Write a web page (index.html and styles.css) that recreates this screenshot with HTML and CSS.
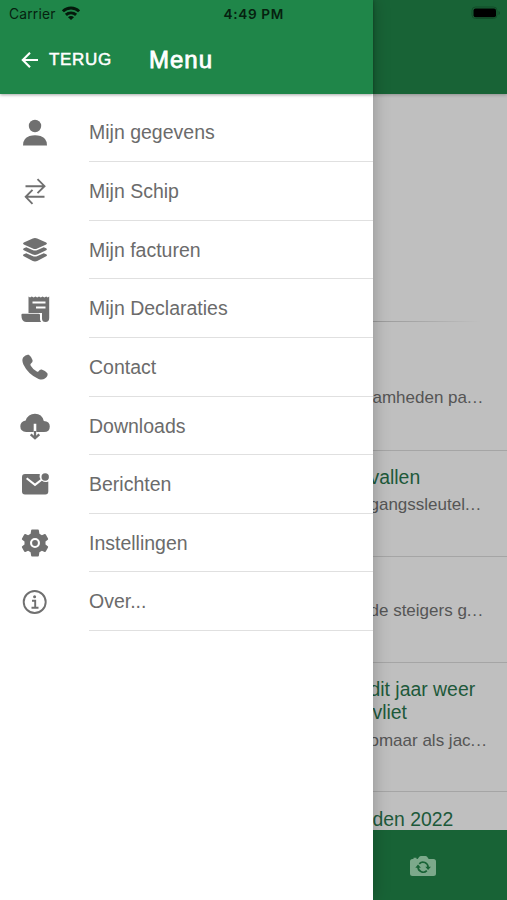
FILE: index.html
```html
<!DOCTYPE html>
<html lang="nl">
<head>
<meta charset="utf-8">
<title>Menu</title>
<link rel="stylesheet" href="styles.css">
</head>
<body>
<div class="phone">
  <div class="status">
    <span class="carrier">Carrier</span>
    <svg class="wifi" viewBox="0 0 18 14"><g fill="none" stroke="#04190b" stroke-width="2.900"><path d="M.9 5.300a11.600 11.600 0 0 1 16.200 0"/><path d="M3.900 8.900a7.400 7.400 0 0 1 10.200 0"/></g><path fill="#04190b" d="M6 11.200a4.200 4.200 0 0 1 6 0L9 14z"/></svg>
    <span class="time">4:49 PM</span>
    <svg class="battery" viewBox="0 0 30 14"><rect x="1" y="1" width="25" height="11.5" rx="3.500" fill="none" stroke="#124d29"/><rect x="2.500" y="2.400" width="22.500" height="8.800" rx="2" fill="#000"/><path d="M27.500 5v4q1.500-.6 1.500-2t-1.500-2" fill="#124d29"/></svg>
  </div>
  <aside class="drawer">
    <header class="bar">
      <svg class="back" viewBox="0 0 18 18"><path d="M17 9H2M9 1.800L1.800 9 9 16.200" fill="none" stroke="#fff" stroke-width="2.100"/></svg>
      <span class="terug">TERUG</span>
      <h1>Menu</h1>
    </header>
    <ul class="menu">
      <li><svg viewBox="0 0 32 32"><circle cx="16" cy="9" r="6.200"/><path d="M4 28.400q-.2-7.200 6.500-9.400 5.500-1.500 11 0 6.700 2.200 6.500 9.400z"/></svg><span>Mijn gegevens</span></li>
      <li><svg viewBox="0 0 32 32"><path class="line" d="M6.500 11.200h19M18.500 4.200l7 7-7 7M25.500 21.800h-19M13.500 14.800l-6.800 7 6.800 7"/></svg><span>Mijn Schip</span></li>
      <li><svg viewBox="0 0 32 32"><path d="M16 4q1.200 0 2.200.5l9 4.100q1.600.9 0 1.900l-9 4.100q-2.200 1-4.400 0l-9-4.100q-1.600-1 0-1.900l9-4.100Q14.800 4 16 4z"/><path d="M4.800 14.300l2.500-1.100 6.200 2.900q2.500 1 5 0l6.200-2.900 2.500 1.100q1.600.9 0 1.900l-9 4.300q-2.200.9-4.400 0l-9-4.300q-1.600-1 0-1.900z"/><path d="M4.800 20.300l2.500-1.100 6.200 2.900q2.500 1 5 0l6.200-2.900 2.500 1.100q1.600.9 0 1.900l-9 4.800q-2.200.9-4.400 0l-9-4.800q-1.600-1 0-1.900z"/></svg><span>Mijn facturen</span></li>
      <li><svg viewBox="0 0 32 32"><path fill-rule="evenodd" d="M9.500 3.500l1.500 1 1.800-1 1.800 1 1.800-1 1.800 1 1.800-1 1.800 1 1.800-1 1.800 1 1.800-1 1.500 1 1.500-1V25q0 4-3.700 4-3.500 0-3.500-3.500V20H9.500zM13.500 8.500v2.100h13V8.500zM17 13.500v2.100h9.500v-2.100z"/><path d="M3.500 20.700h16.200q1.300 0 1.300 1.300v4q0 2 1.200 3H7q-4.600 0-4.600-7 0-1.300 1.100-1.300z"/></svg><span>Mijn Declaraties</span></li>
      <li><svg viewBox="0 0 32 32"><path d="M4.300 6.200Q7 3 9.800 3.800q2.800 2 3.800 5.500.4 2-1.600 3.300-1 .8-.4 1.800 2.200 3.800 6.200 6.200 1 .6 1.800-.4 1.200-1.900 3.100-1.600 3.600 1 5.700 3.700 1 2.700-2.500 5.200-2.500 1.800-6.300.5Q9.200 23.500 4.400 13.500q-2-4.800-.1-7.300z"/></svg><span>Contact</span></li>
      <li><svg viewBox="0 0 32 32"><path d="M7.200 22Q1.300 21.600 1.300 16.300q0-4.600 5.400-5.800Q9 3.700 16 3.700q7 0 8.800 7.200 6 .4 6 5.500 0 5.600-5.800 5.600H17.300v-8.300h-2.600V22z"/><path class="bold" d="M16 21v7M11.700 24.300L16 28.300l4.300-4"/></svg><span>Downloads</span></li>
      <li><svg viewBox="0 0 32 32"><circle cx="26.200" cy="9" r="3.700"/><path fill-rule="evenodd" d="M6 6h14.800q-.8 3.200.7 5.300L16 15.600 8.300 9.500 7 11.100l9 7.100 6.900-5.400q2.900 2.100 6.400.6v10.200q0 3-3 3H6q-3 0-3-3V9q0-3 3-3z"/></svg><span>Berichten</span></li>
      <li><svg viewBox="0 0 32 32"><path fill-rule="evenodd" d="M13 2.500h6q.8 0 .9.900l.5 3.300 2.500 1.500 2.700-1.100q.8-.3 1.200.4l2.200 4q.4.700-.2 1.200L26.500 14.500v3l2.300 1.800q.6.500.2 1.200l-2.200 4q-.4.700-1.200.4l-2.700-1.100-2.500 1.500-.5 3.300q-.1.900-.9.900h-6q-.8 0-.9-.9l-.5-3.300-2.500-1.500-2.700 1.100q-.8.3-1.200-.4l-2.200-4q-.4-.7.200-1.200l2.300-1.800v-3l-2.300-1.800q-.6-.5-.2-1.200l2.200-4q.4-.7 1.200-.4l2.700 1.100 2.500-1.500.5-3.300Q12.200 2.500 13 2.500zM16 11a5 5 0 1 0 0 10 5 5 0 0 0 0-10z"/><circle cx="16" cy="16" r="2.900"/></svg><span>Instellingen</span></li>
      <li><svg viewBox="0 0 32 32"><circle class="line" cx="15.700" cy="16" r="11"/><circle cx="15.600" cy="10.800" r="1.500"/><path class="line" d="M13 14.800h3.200v6.700M12.500 21.700h7"/></svg><span>Over...</span></li>
    </ul>
  </aside>
  <main class="page">
    <div class="bar"></div>
    <section class="hero"></section>
    <div class="feed">
      <article class="first"><p>amheden pa<span class="dots">...</span></p></article>
      <article><h2 class="cut">vallen</h2><p class="cut">gangssleutel<span class="dots">...</span></p></article>
      <article><h2></h2><p class="cut">de steigers g<span class="dots">...</span></p></article>
      <article><h2 class="cut">dit jaar weer<br><span class="tail">vliet</span></h2><p class="cut">omaar als jac<span class="dots">...</span></p></article>
      <article class="last"><h2>den 2022</h2></article>
    </div>
    <footer><svg viewBox="0 0 28 22"><path fill="#7ca98b" d="M3.500 4h1V2.700h3V4h1.200l1.600-2.300Q11 1 12 1h4.500q1 0 1.600.7L19.700 4h4.800Q27 4 27 6.500v12q0 2.500-2.500 2.500h-21Q1 21 1 18.500v-12Q1 4 3.500 4z"/><path fill="none" stroke="#186336" stroke-width="1.700" d="M10.300 8.800a5.100 5.100 0 0 1 8.800 3.500M17.800 15.600A5.100 5.100 0 0 1 9 12.100"/><path fill="#186336" d="M16.300 11.700h5.600l-2.800 3.200zM6.300 12.800h5.600L9 9.500z"/></svg></footer>
  </main>
</div>
</body>
</html>
```
FILE: styles.css
```css
* { box-sizing: border-box; }
body, h1, h2, p, ul { margin: 0; padding: 0; }
body { font-family: "Liberation Sans", Arial, sans-serif; }
.phone {
  position: relative;
  display: grid;
  grid-template-columns: 372.5px 1fr;
  width: 507px;
  height: 900px;
  overflow: hidden;
  background: #fff;
}
.status {
  position: absolute;
  z-index: 3;
  top: 0;
  left: 0;
  width: 100%;
  height: 27px;
  display: flex;
  align-items: center;
  padding: 0 6px 0 9px;
  font-family: Inter, sans-serif;
  font-size: 13.8px;
  color: #06210f;
}
.carrier { width: 53px; letter-spacing: .2px; }
.wifi { width: 18px; height: 14px; margin-bottom: 2px; }
.time { margin-left: 143.500px; font-weight: 600; font-size: 13.600px; letter-spacing: .65px; white-space: nowrap; }
.battery { width: 30px; height: 14px; margin-left: auto; margin-bottom: 1px; }
.drawer { position: relative; z-index: 2; background: #fff; box-shadow: 0 0 16px rgba(0,0,0,.25); }
.bar {
  display: flex;
  align-items: center;
  height: 93.500px;
  padding: 27px 0 0 21px;
  background: #1f8649;
  color: #fff;
  box-shadow: 0 1px 3px rgba(0,0,0,.35);
}
.back { width: 18px; height: 18px; margin-top: -1px; }
.terug { width: 100px; margin-left: 10px; font-size: 17px; letter-spacing: .7px; -webkit-text-stroke: .5px #fff; }
h1 { font-size: 24px; font-weight: 400; -webkit-text-stroke: .8px #fff; letter-spacing: 1px; }
.menu { list-style: none; padding-top: 9.800px; }
.menu li { display: flex; align-items: center; height: 58.650px; padding-left: 19px; }
.menu svg { width: 32px; height: 32px; margin-right: 38px; fill: #707070; flex: none; }
.menu .line { fill: none; stroke: #707070; stroke-width: 1.900; }
.menu .bold { fill: none; stroke: #707070; stroke-width: 2.300; }
.menu span {
  flex: 1;
  height: 100%;
  line-height: 59px;
  border-bottom: 1.500px solid #e0e0e0;
  color: #6b6b6b;
  font-size: 19.500px;
}
.page { display: flex; flex-direction: column; min-width: 0; height: 900px; overflow: hidden; background: #bfbfbf; }
.page .bar { flex: none; background: #186336; box-shadow: 0 1px 3px rgba(0,0,0,.25); }
.hero {
  flex: none;
  height: 228.500px;
  border-bottom: 1.500px solid;
  border-image: linear-gradient(90deg, #999, #aaa 40%, #bfbfbf 80%) 1;
}
.feed { flex: 1; min-height: 0; overflow: hidden; }
article { height: 106.200px; padding-top: 15px; border-bottom: 1px solid #a5a5a5; white-space: nowrap; }
.first { height: 128.500px; padding-top: 60px; }
article:nth-child(4) { height: 129.500px; }
.last { border: 0; }
h2 { min-height: 23px; font-size: 19.400px; font-weight: 400; line-height: 24px; color: #1d593a; }
h2.cut { line-height: 23.500px; }
.tail { padding-left: 3px; }
p { margin-top: 3px; font-size: 17px; line-height: 25px; color: #555; }
.cut { margin-left: -3px; }
.dots { letter-spacing: .8px; }
footer { flex: none; height: 70px; padding: 25px 0 0 36px; background: #186336; }
footer svg { display: block; width: 28px; height: 22px; }
```
